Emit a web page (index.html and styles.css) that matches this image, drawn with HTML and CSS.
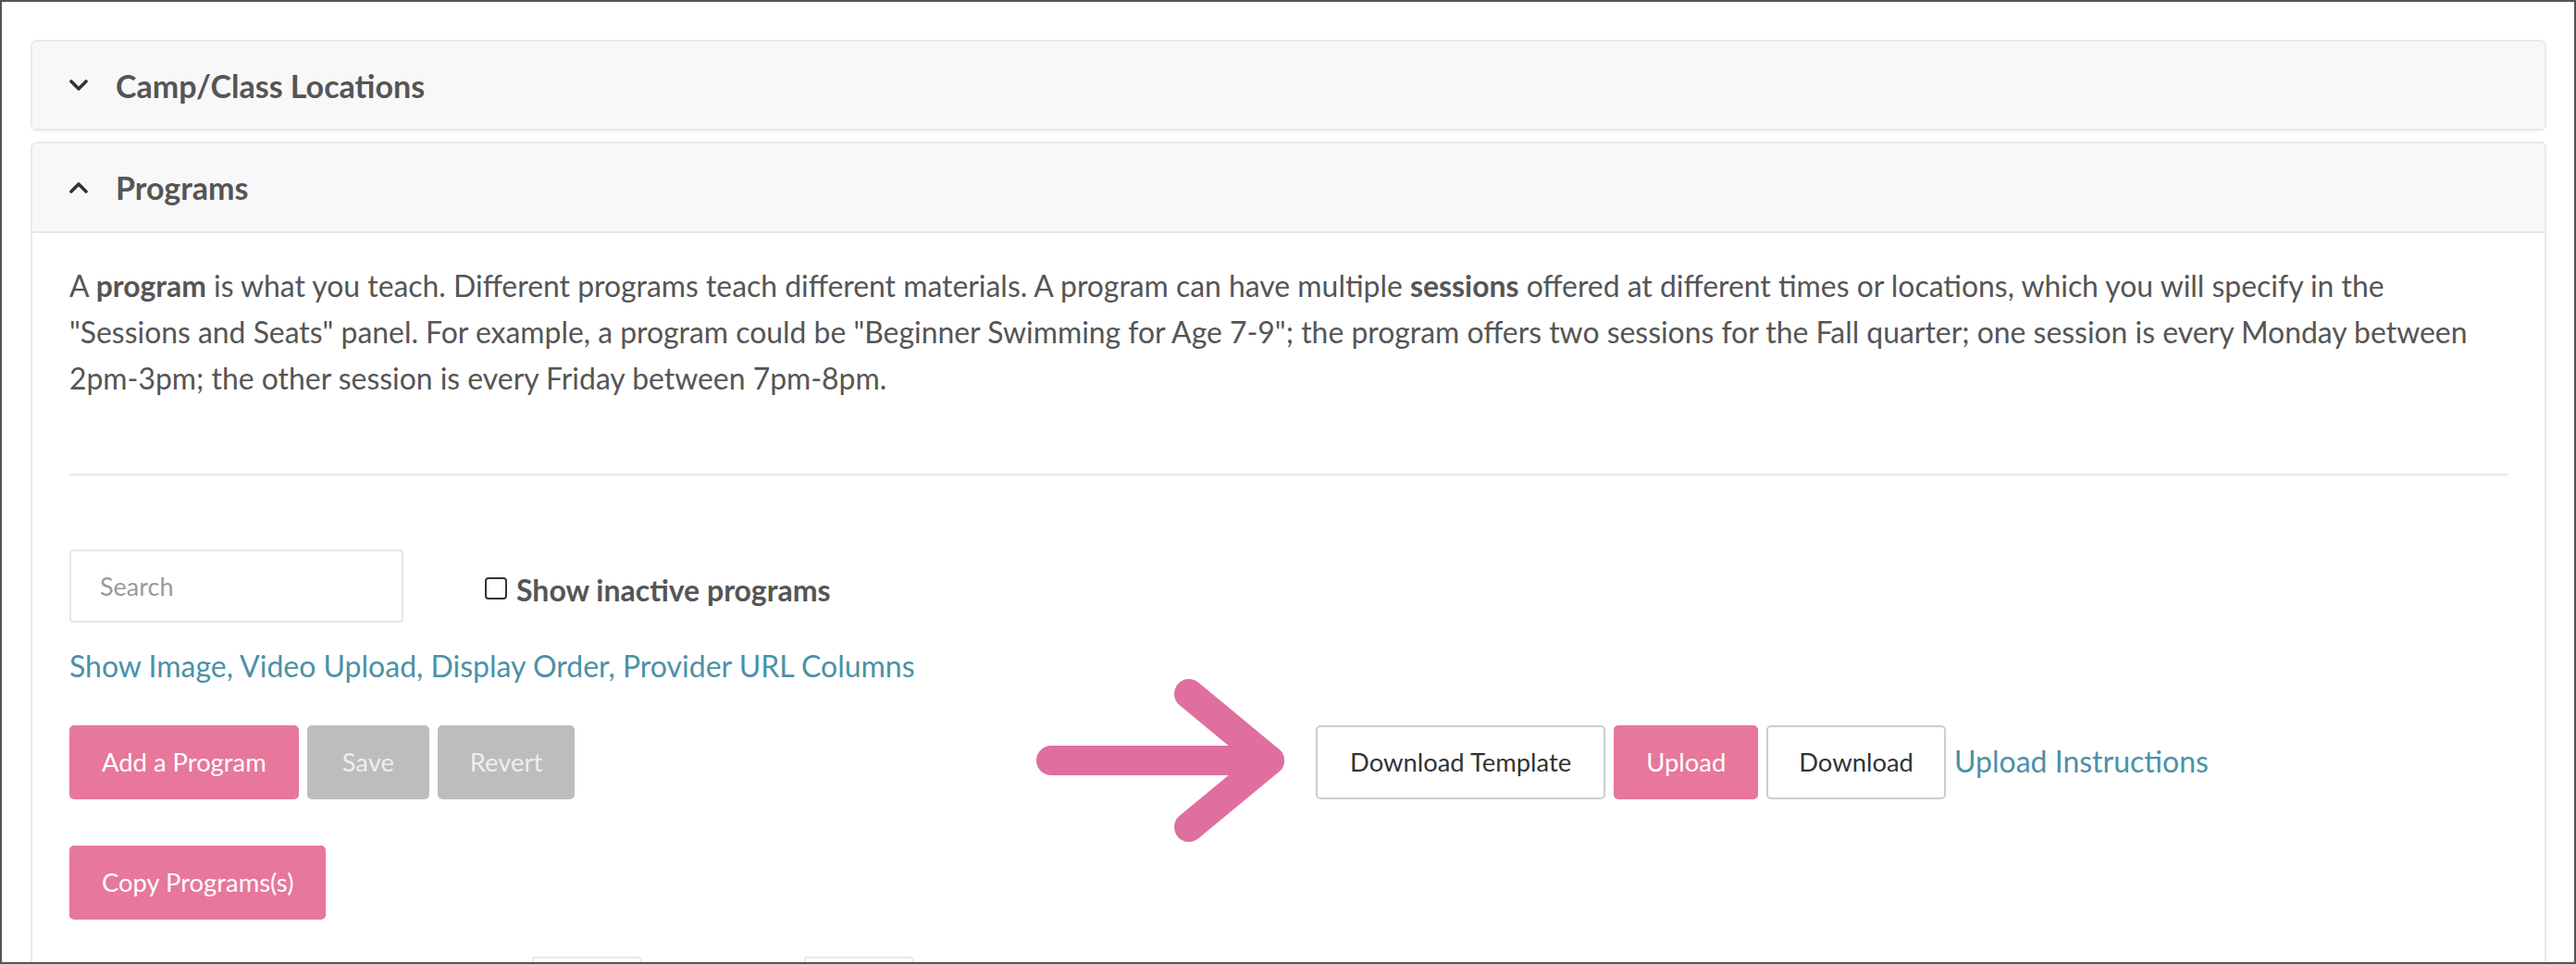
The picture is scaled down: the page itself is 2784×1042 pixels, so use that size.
FILE: index.html
```html
<!DOCTYPE html>
<html lang="en">
<head>
<meta charset="utf-8">
<title>Programs</title>
<link rel="stylesheet" href="styles.css">
</head>
<body>
<div class="frame">
  <section class="panel">
    <div class="panel-header">
      <svg class="chev" width="20" height="12" viewBox="0 0 20 12"><path d="M2 2 L10 10 L18 2" fill="none" stroke="#333" stroke-width="3.6" stroke-linecap="round" stroke-linejoin="round"/></svg>
      <span class="panel-title">Camp/Class Locations</span>
    </div>
  </section>
  <section class="panel open">
    <div class="panel-header">
      <svg class="chev" width="20" height="12" viewBox="0 0 20 12"><path d="M2 10 L10 2 L18 10" fill="none" stroke="#333" stroke-width="3.6" stroke-linecap="round" stroke-linejoin="round"/></svg>
      <span class="panel-title">Programs</span>
    </div>
    <div class="panel-body">
      <p class="intro">A <b>program</b> is what you teach. Different programs teach different materials. A program can have multiple <b>sessions</b> offered at different times or locations, which you will specify in the "Sessions and Seats" panel. For example, a program could be "Beginner Swimming for Age 7-9"; the program offers two sessions for the Fall quarter; one session is every Monday between 2pm-3pm; the other session is every Friday between 7pm-8pm.</p>
      <hr class="divider">
      <div class="search-row">
        <input class="search" type="text" placeholder="Search">
        <label class="check"><span class="box"></span>Show inactive programs</label>
      </div>
      <a class="link cols-link" href="#">Show Image, Video Upload, Display Order, Provider URL Columns</a>
      <div class="btn-row">
        <div class="btn-group">
          <button class="btn pink">Add a Program</button>
          <button class="btn gray">Save</button>
          <button class="btn gray">Revert</button>
        </div>
        <div class="btn-group right">
          <button class="btn white wide">Download Template</button>
          <button class="btn pink">Upload</button>
          <button class="btn white">Download</button>
          <a class="link upload-link" href="#">Upload Instructions</a>
        </div>
        <svg class="arrow" width="270" height="180" viewBox="0 0 270 180">
          <path d="M16 89 L252 89" fill="none" stroke="#df6f9f" stroke-width="32" stroke-linecap="round"/>
          <path d="M165 17 L252 89 L165 161" fill="none" stroke="#df6f9f" stroke-width="32" stroke-linecap="round" stroke-linejoin="round"/>
        </svg>
      </div>
      <div class="copy-row">
        <button class="btn pink">Copy Programs(s)</button>
      </div>
      <div class="bottom-row">
        <span class="mini first"></span>
        <span class="mini second"></span>
      </div>
    </div>
  </section>
</div>
</body>
</html>
```

FILE: styles.css
```css
* { box-sizing: border-box; }
html, body { margin: 0; padding: 0; background: #fff; }
body { font-family: Lato, "Open Sans", "Liberation Sans", sans-serif; color: #555; }

.frame {
  width: 2784px;
  height: 1042px;
  border: 2px solid #555;
  overflow: hidden;
  padding: 41px 30px 0 31px;
}

.panel {
  border: 2px solid #e9e9e9;
  border-radius: 7px;
  background: #fff;
  box-shadow: 0 2px 2px rgba(0,0,0,0.04);
}
.panel + .panel { margin-top: 12px; }

.panel-header {
  height: 94px;
  background: #f8f8f8;
  border-radius: 6px 6px 0 0;
  display: flex;
  align-items: center;
  padding-left: 40px;
  gap: 30px;
}
.panel.open .panel-header {
  height: 97px;
  border-bottom: 2px solid #e9e9e9;
}
.chev { display: block; flex: none; }
.panel-title {
  font-size: 34px;
  font-weight: 700;
  color: #555;
}

.panel-body { padding: 32px 40px 0; }

.intro {
  margin: 0;
  max-width: 2620px;
  font-size: 31.9px;
  line-height: 50px;
  color: #555;
}
.intro b { font-weight: 700; }

.divider {
  margin: 78px 0 80px;
  border: 0;
  border-top: 2px solid #e8e8e8;
  height: 0;
}

.search-row {
  display: flex;
  align-items: center;
  height: 79px;
  gap: 88px;
}
.search {
  width: 361px;
  height: 79px;
  border: 2px solid #e6e6e6;
  border-radius: 4px;
  padding: 0 0 0 31px;
  font-family: Lato, sans-serif;
  font-size: 27px;
  color: #555;
  outline: none;
}
.search::placeholder { color: #9a9a9a; }
.check {
  display: flex;
  align-items: center;
  gap: 10px;
  font-size: 32px;
  font-weight: 700;
  color: #555;
  margin-top: 8px;
}
.box {
  width: 24px;
  height: 24px;
  border: 2px solid #333;
  border-radius: 4px;
  background: #fff;
  margin-top: -4px;
}

.link {
  color: #4b91a7;
  text-decoration: none;
  font-size: 32px;
}
.cols-link {
  display: block;
  margin-top: 22px;
  line-height: 50px;
}

.btn-row {
  position: relative;
  margin-top: 39px;
  display: grid;
  grid-template-columns: 1347px 1fr;
}
.btn-group {
  display: flex;
  align-items: center;
  gap: 9px;
}
.btn-group.right { gap: 9px; }

.btn {
  height: 80px;
  padding: 0 33px;
  border: 2px solid transparent;
  border-radius: 5px;
  font-family: Lato, sans-serif;
  font-size: 27.4px;
  line-height: 1;
  cursor: pointer;
}
.btn.pink { background: #e7779b; border-color: #e7779b; color: #fff; }
.btn.gray { background: #bdbdbd; border-color: #bdbdbd; color: #eee; min-width: 132px; }
.btn.white { background: #fff; border-color: #cdcdcd; color: #333; }
.btn.wide { padding: 0 35px; }

.upload-link { margin-top: -4px; }

.arrow {
  position: absolute;
  left: 1045px;
  top: -51px;
}

.copy-row { margin-top: 50px; display: flex; }

.bottom-row {
  margin-top: 40px;
  display: flex;
  height: 40px;
}
.mini {
  display: block;
  width: 118px;
  height: 40px;
  border: 2px solid #e8e8e8;
  border-radius: 3px;
}
.mini.first { margin-left: 500px; }
.mini.second { margin-left: 176px; }
```
